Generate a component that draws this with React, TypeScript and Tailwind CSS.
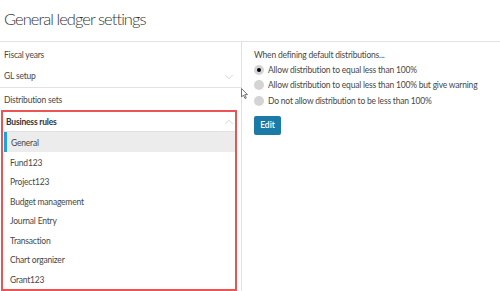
import { ChevronDown, ChevronUp } from 'lucide-react';

const rules = ['General', 'Fund123', 'Project123', 'Budget management', 'Journal Entry', 'Transaction', 'Chart organizer', 'Grant123'];

const options = [
  { label: 'Allow distribution to equal less than 100%', checked: true },
  { label: 'Allow distribution to equal less than 100% but give warning', checked: false },
  { label: 'Do not allow distribution to be less than 100%', checked: false },
];

export default function App() {
  return (
    <div className="relative w-[500px] h-[291px] overflow-hidden bg-white text-[#474747] font-['Lato',sans-serif]">
      <header className="h-[42px] px-[4px] pb-[2px] flex items-center border-b border-[#e2e2e2]">
        <h1 className="text-[16.5px] font-light text-[#333] tracking-[-0.95px]">General ledger settings</h1>
      </header>

      <div className="flex">
        <aside className="w-[242px] border-r border-[#e2e2e2] text-[8.5px] tracking-[-0.2px]">
          <div className="h-[24px] px-[4px] pt-[2px] flex items-center">Fiscal years</div>
          <div className="h-[22px] pl-[4px] pr-[5px] flex items-center justify-between border-b border-[#e2e2e2]">
            <span>GL setup</span>
            <ChevronDown className="w-[14px] h-[14px] text-[#c4c4c4]" strokeWidth={1.2} />
          </div>
          <div className="h-[22px] px-[4px] pt-[2px] flex items-center">Distribution sets</div>

          <section className="ml-px w-[236px] border-2 border-[#ea5454]">
            <div className="h-[20px] pl-[3px] pt-[1px] flex items-center justify-between border-b border-[#e2e2e2]">
              <span className="font-bold text-[#333]">Business rules</span>
              <ChevronUp className="w-[14px] h-[14px] -mr-[1px] text-[#c4c4c4]" strokeWidth={1.2} />
            </div>
            <ul>
              {rules.map((r, i) => (
                <li
                  key={r}
                  className={
                    i === 0
                      ? 'h-[19.6px] pt-[3px] flex items-center pl-[4px] bg-[#ececec] border-l-[3px] border-[#1ea4dc] ml-[1px]'
                      : 'h-[19.6px] pt-[3px] flex items-center pl-[7px]'
                  }
                >
                  {r}
                </li>
              ))}
            </ul>
          </section>
        </aside>

        <main className="flex-1 pl-[12px] pt-[6px] text-[8.5px] tracking-[-0.2px]">
          <p className="h-[14px] flex items-center pt-[1px]">When defining default distributions...</p>
          <div className="flex flex-col">
            {options.map((o) => (
              <label key={o.label} className="flex items-center gap-[4px] h-[15.5px] whitespace-nowrap">
                <span className="w-[10px] h-[10px] rounded-full bg-[#d4d4d4] flex items-center justify-center">
                  {o.checked && <span className="w-[4px] h-[4px] rounded-full bg-black" />}
                </span>
                <span className="pt-[1px]">{o.label}</span>
              </label>
            ))}
          </div>
          <button className="mt-[7px] h-[19px] w-[27px] rounded-[2px] bg-[#1b7aa6] text-white text-[8.5px] font-semibold tracking-normal">
            Edit
          </button>
        </main>
      </div>

      {/* mouse pointer */}
      <svg className="absolute left-[241px] top-[88px]" width="7" height="11" viewBox="0 0 7 11">
        <path d="M0.5 0.5 L0.5 9 L2.5 7 L4 10.5 L5.3 10 L3.8 6.6 L6.5 6.6 Z" fill="white" stroke="#555" strokeWidth="0.8" />
      </svg>
    </div>
  );
}
